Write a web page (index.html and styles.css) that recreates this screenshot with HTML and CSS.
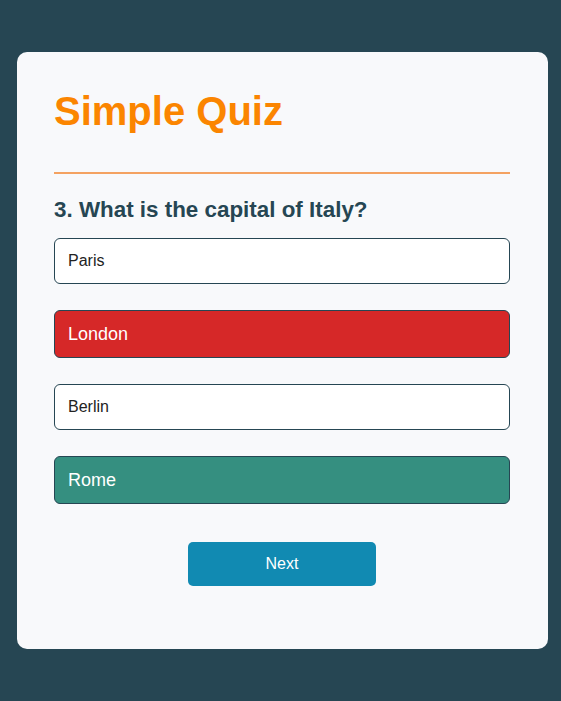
FILE: index.html
```html
<!DOCTYPE html>
<html lang="en">
<head>
<meta charset="utf-8">
<title>Simple Quiz</title>
<link rel="stylesheet" href="styles.css">
</head>
<body>
<main class="card">
  <h1 class="title">Simple Quiz</h1>
  <div class="divider"></div>
  <h2 class="question">3. What is the capital of Italy?</h2>
  <div class="options">
    <button class="option">Paris</button>
    <button class="option option--wrong">London</button>
    <button class="option">Berlin</button>
    <button class="option option--correct">Rome</button>
  </div>
  <div class="actions">
    <button class="next">Next</button>
  </div>
</main>
</body>
</html>
```

FILE: styles.css
```css
html, body {
  margin: 0;
  padding: 0;
}
body {
  background: #264653;
  font-family: "Liberation Sans", Arial, sans-serif;
  min-height: 701px;
  padding: 52px 13px 0 17px;
  box-sizing: border-box;
}
.card {
  background: #f8f9fb;
  border-radius: 10px;
  padding: 36px 38px 63px 37px;
  display: flex;
  flex-direction: column;
}
.title {
  margin: 0;
  font-size: 40px;
  font-weight: bold;
  color: #fb8500;
  line-height: 46px;
}
.divider {
  height: 2px;
  background: #f4a261;
  margin-top: 38px;
}
.question {
  margin: 23px 0 0 0;
  font-size: 22.4px;
  font-weight: bold;
  color: #264653;
  line-height: 26px;
}
.options {
  display: flex;
  flex-direction: column;
  gap: 26px;
  margin-top: 15px;
}
.option {
  display: block;
  width: 100%;
  text-align: left;
  font-family: "Liberation Sans", Arial, sans-serif;
  font-size: 16px;
  line-height: 18px;
  color: #222;
  background: #ffffff;
  border: 1px solid #264653;
  border-radius: 6px;
  padding: 13px 13px;
  margin: 0;
}
.option--wrong {
  background: #d62828;
  color: #ffffff;
  font-size: 18px;
  line-height: 20px;
}
.option--correct {
  background: #358f80;
  color: #ffffff;
  font-size: 18px;
  line-height: 20px;
}
.actions {
  display: flex;
  justify-content: center;
  margin-top: 38px;
}
.next {
  width: 188px;
  height: 44px;
  background: #118ab2;
  color: #ffffff;
  border: none;
  border-radius: 5px;
  font-family: "Liberation Sans", Arial, sans-serif;
  font-size: 16px;
  padding: 0;
}
```
